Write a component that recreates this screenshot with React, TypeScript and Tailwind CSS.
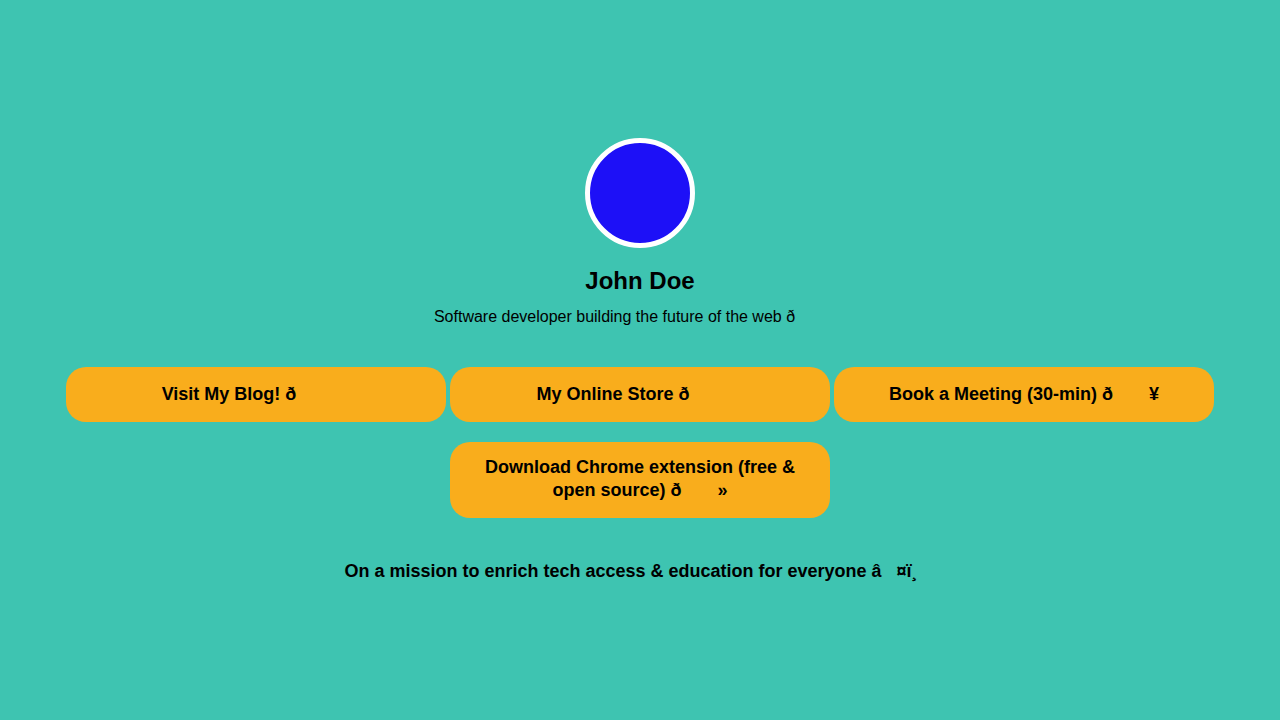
const links = [
  { label: "Visit My Blog! \u00f0\u009f\u0093\u009d" },
  { label: "My Online Store \u00f0\u009f\u009b\u008d" },
  { label: "Book a Meeting (30-min) \u00f0\u009f\u008e\u00a5" },
  { label: "Download Chrome extension (free & open source) \u00f0\u009f\u0092\u00bb" },
]

// the emoji came through as latin-1 bytes; the C1 control bytes render wider and taller in the original
function Garbled({ text, tall = "leading-[25px]" }: { text: string; tall?: string }) {
  const parts = text.split(/([\u0080-\u009f]+)/)
  return (
    <>
      {parts.map((part, i) =>
        /^[\u0080-\u009f]+$/.test(part) ? (
          <span key={i} className={`tracking-[4px] ${tall}`}>
            {part}
          </span>
        ) : (
          <span key={i}>{part}</span>
        )
      )}
    </>
  )
}

export default function App() {
  return (
    <div
      className="min-h-screen w-full bg-[#3ec4b1] flex flex-col items-center justify-center pb-[1px] text-black"
      style={{ fontFamily: '"Liberation Sans", Arial, sans-serif' }}
    >
      <div className="w-[110px] h-[110px] rounded-full border-[5px] border-white bg-[#1d10f7]" />
      <h1 className="mt-[19px] text-[24px] font-bold leading-[28px]">John Doe</h1>
      <p className="mt-[13px] text-[16px] leading-[18px]">
        <Garbled text={"Software developer building the future of the web \u00f0\u009f\u009a\u0080"} tall="leading-[18px]" />
      </p>

      <div className="mt-[31px] w-[1152px] flex flex-wrap justify-center">
        {links.map((link) => (
          <a
            key={link.label}
            href="#"
            className="w-[380px] mx-[2px] my-[10px] px-5 py-[15px] rounded-[20px] bg-[#f9ad1c] text-center text-[18px] font-bold leading-[21px]"
          >
            <Garbled text={link.label} />
          </a>
        ))}
      </div>

      <p className="mt-[33px] text-[18px] font-bold leading-[21px]">
        <Garbled text={"On a mission to enrich tech access & education for everyone \u00e2\u009d\u00a4\u00ef\u00b8\u008f"} tall="leading-[21px]" />
      </p>
    </div>
  )
}
